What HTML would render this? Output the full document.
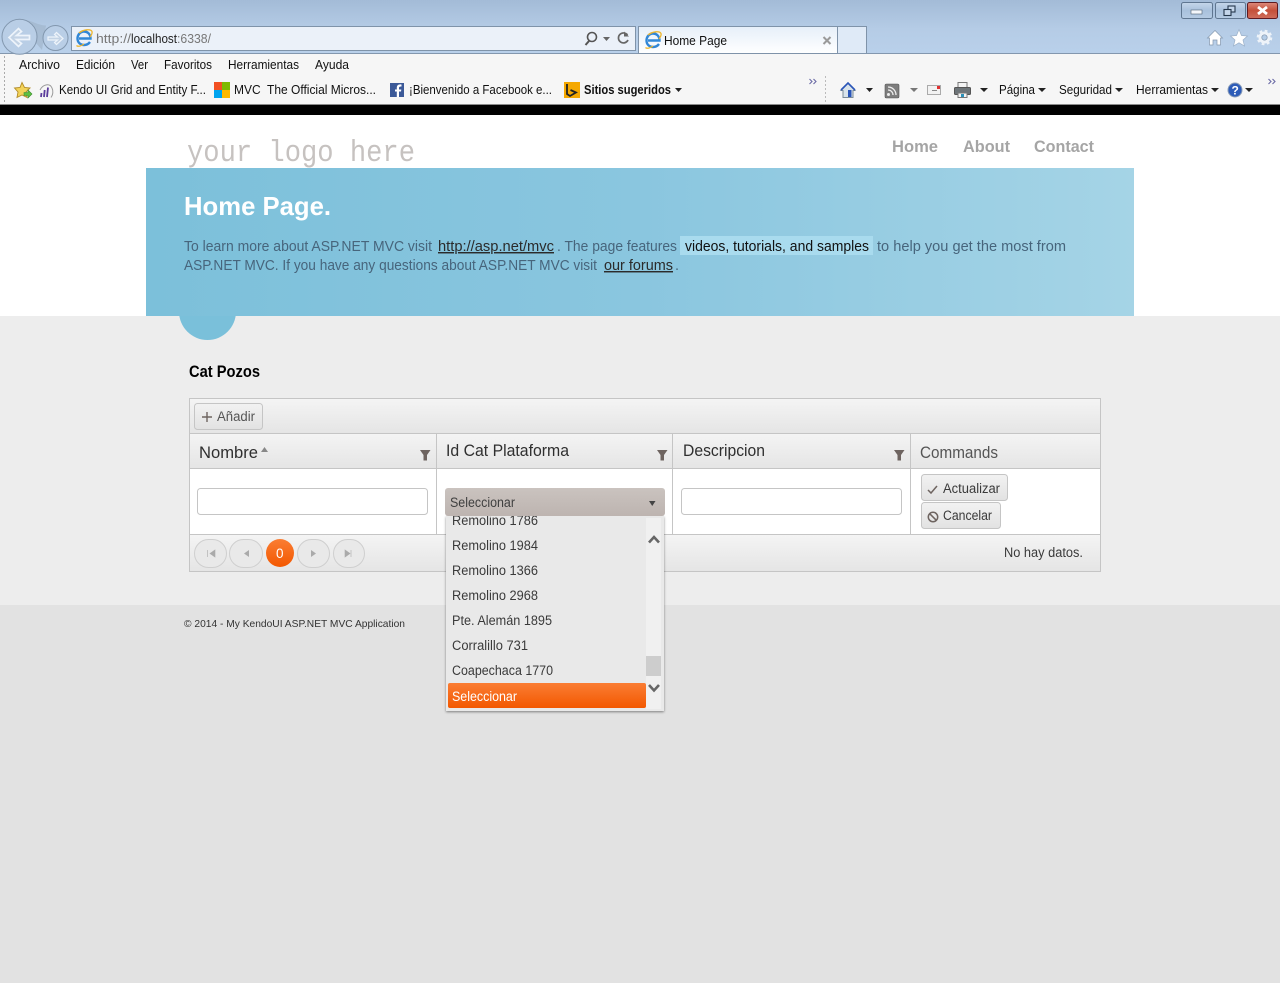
<!DOCTYPE html>
<html><head><meta charset="utf-8"><title>Home Page</title>
<style>
html,body{margin:0;padding:0;background:#e2e2e2;overflow:hidden}
svg{display:block;position:absolute;left:0;top:0}
text{font-family:"Liberation Sans",sans-serif;white-space:pre}
.m{font-size:12.5px;fill:#111}
.h{font-size:16.5px;fill:#2f2f2f}
.i{font-size:13.5px;fill:#3a3a3a}
.p{font-size:14.5px;fill:#47657c}
.n{font-size:17px;font-weight:bold;fill:#a5a5a5}
</style></head><body>
<svg width="1280" height="983" viewBox="0 0 1280 983" xmlns="http://www.w3.org/2000/svg">
<defs>
<linearGradient id="top" x1="0" y1="0" x2="0" y2="1"><stop offset="0" stop-color="#a3bbd7"/><stop offset=".55" stop-color="#b5cce6"/><stop offset="1" stop-color="#b9d0ea"/></linearGradient>
<linearGradient id="hero" x1="0" y1="0" x2="1" y2="0"><stop offset="0" stop-color="#7cc0da"/><stop offset=".5" stop-color="#8ac6df"/><stop offset="1" stop-color="#a5d4e6"/></linearGradient>
<linearGradient id="bar" x1="0" y1="0" x2="0" y2="1"><stop offset="0" stop-color="#f4f4f4"/><stop offset="1" stop-color="#e5e5e5"/></linearGradient>
<linearGradient id="btn" x1="0" y1="0" x2="0" y2="1"><stop offset="0" stop-color="#f2f2f2"/><stop offset="1" stop-color="#e2e2e2"/></linearGradient>
<linearGradient id="dd" x1="0" y1="0" x2="0" y2="1"><stop offset="0" stop-color="#cac3bf"/><stop offset="1" stop-color="#bdb4b0"/></linearGradient>
<linearGradient id="or" x1="0" y1="0" x2="0" y2="1"><stop offset="0" stop-color="#fa7d33"/><stop offset="1" stop-color="#f35800"/></linearGradient>
<linearGradient id="tab" x1="0" y1="0" x2="0" y2="1"><stop offset="0" stop-color="#e6eff9"/><stop offset="1" stop-color="#ffffff"/></linearGradient>
<linearGradient id="wb" x1="0" y1="0" x2="0" y2="1"><stop offset="0" stop-color="#c5d6ea"/><stop offset=".5" stop-color="#a9c1dc"/><stop offset="1" stop-color="#b5cbe3"/></linearGradient>
<linearGradient id="wr" x1="0" y1="0" x2="0" y2="1"><stop offset="0" stop-color="#dd8a7c"/><stop offset=".5" stop-color="#c4503a"/><stop offset="1" stop-color="#cf6e5c"/></linearGradient>
<filter id="sh" x="-10%" y="-10%" width="120%" height="120%"><feDropShadow dx="0" dy="1" stdDeviation="1.200" flood-color="#000" flood-opacity=".45"/></filter>
<clipPath id="lc"><rect x="446" y="516" width="200" height="195"/></clipPath>
</defs>

<!-- page backgrounds -->
<rect width="1280" height="983" fill="#e2e2e2"/>
<rect y="105" width="1280" height="211" fill="#fff"/>
<rect y="316" width="1280" height="289" fill="#ededed"/>

<!-- browser chrome -->
<rect width="1280" height="53" fill="url(#top)"/>
<rect y="53" width="1280" height="1" fill="#8397ae"/>
<rect y="54" width="1280" height="50" fill="#f6f6f6"/>
<rect y="104" width="1280" height="1" fill="#8a8a8a"/>
<rect y="105" width="1280" height="10" fill="#000"/>
<path d="M22 19.500C32 20 36 25 46 25.500L42 50L30 36Z" fill="#9fb3ca" opacity=".65"/>
<circle cx="19.500" cy="36.800" r="17.500" fill="#b9cee6" stroke="#8297ae"/>
<path d="M9 37.500L18.500 28.500L21.500 31.500L16.500 35.500H29.500V39.500H16.500L21.500 43.500L18.500 46.500Z" fill="#c3d3e5" stroke="#eef4fb" stroke-width="1.700"/>
<circle cx="55.500" cy="38" r="12.500" fill="#b9cee6" stroke="#8297ae"/>
<path d="M63 38.500L56.500 32.500L54.500 34.500L57.500 37H48V40H57.500L54.500 42.500L56.500 44.500Z" fill="#c3d3e5" stroke="#eef4fb" stroke-width="1.200"/>
<rect x="71.500" y="26.500" width="564" height="24" fill="#ebf1f9" stroke="#7f93a9"/>
<!-- IE icon -->
<path d="M79 38.500H90.500C90.500 34 87.500 31.500 84 31.500C80 31.500 77.500 35 77.500 38.500C77.500 42.500 80.500 45 84 45C86.500 45 88.500 44 90 42" fill="none" stroke="#3187d6" stroke-width="2.400"/>
<path d="M76.500 45.500C78 47 81 46 84 44M79 33C84 29 91 29 92 31.500C92.500 33 91.500 35 90 37" fill="none" stroke="#eeb52a" stroke-width="1.300"/>
<text x="96" y="43" class="m" style="fill:#777" textLength="35" lengthAdjust="spacingAndGlyphs">http://</text>
<text x="131" y="43" class="m" style="fill:#222" textLength="46" lengthAdjust="spacingAndGlyphs">localhost</text>
<text x="177" y="43" class="m" style="fill:#777" textLength="34" lengthAdjust="spacingAndGlyphs">:6338/</text>
<circle cx="592" cy="37" r="4.500" fill="none" stroke="#555" stroke-width="1.600"/>
<path d="M589 41L585.500 45" stroke="#555" stroke-width="2"/>
<path d="M603 37H610L606.500 41Z" fill="#666"/>
<path d="M627.500 35A5 5 0 1 0 628 40" fill="none" stroke="#666" stroke-width="1.700"/>
<path d="M624 31.500V36.500H629Z" fill="#666"/>
<rect x="638.500" y="26.500" width="199" height="27" fill="url(#tab)" stroke="#7f93a9"/>
<rect x="838" y="27" width="28.500" height="26" fill="#dfeaf7"/>
<path d="M838 26.500H866.500V53" fill="none" stroke="#7f93a9"/>
<!-- tab IE icon -->
<path d="M648 40.500H659.500C659.500 36 656.500 33.500 653 33.500C649 33.500 646.500 37 646.500 40.500C646.500 44.500 649.500 47 653 47C655.500 47 657.500 46 659 44" fill="none" stroke="#3187d6" stroke-width="2.400"/>
<path d="M645.500 47.500C647 49 650 48 653 46M648 35C653 31 660 31 661 33.500C661.500 35 660.500 37 659 39" fill="none" stroke="#eeb52a" stroke-width="1.300"/>
<text x="664" y="45" class="m" textLength="63" lengthAdjust="spacingAndGlyphs">Home Page</text>
<path d="M823.500 37L830.500 44M830.500 37L823.500 44" stroke="#9a9a9a" stroke-width="2"/>
<!-- window buttons -->
<rect x="1181.500" y="2.500" width="31" height="16" rx="2" fill="url(#wb)" stroke="#5f7690"/>
<rect x="1191" y="10" width="11" height="4" fill="#f4f7fb" stroke="#4f6175" stroke-width=".6"/>
<rect x="1215.500" y="2.500" width="30" height="16" rx="2" fill="url(#wb)" stroke="#5f7690"/>
<rect x="1228" y="6" width="7" height="6" fill="#c5d6ea" stroke="#26384c" stroke-width="1.100"/>
<rect x="1224" y="9.500" width="7" height="6" fill="#c5d6ea" stroke="#26384c" stroke-width="1.100"/>
<rect x="1247.500" y="2.500" width="30" height="16" rx="2" fill="url(#wr)" stroke="#5f1a20"/>
<path d="M1258 7L1267 14M1267 7L1258 14" stroke="#fff" stroke-width="2.800"/>
<!-- home star gear -->
<path d="M1207.500 38L1215 30.500L1222.500 38H1220.500V45H1217V40H1213V45H1209.500V38Z" fill="#fff" stroke="#8497ad" stroke-width=".7"/>
<path d="M1239 29.500L1241.500 35.500L1247.500 36L1243 40L1244.500 46L1239 42.800L1233.500 46L1235 40L1230.500 36L1236.500 35.500Z" fill="#fff" stroke="#9bb0c8" stroke-width=".7"/>
<circle cx="1264.500" cy="37.500" r="6.800" fill="none" stroke="#eef3f9" stroke-width="2" stroke-dasharray="2.800 2.540"/>
<circle cx="1264.500" cy="37.500" r="4.500" fill="none" stroke="#eef3f9" stroke-width="3"/>
<circle cx="1264.500" cy="37.500" r="2.700" fill="none" stroke="#8497ad" stroke-width=".7"/>
<!-- menu -->
<line x1="4.500" y1="56" x2="4.500" y2="103" stroke="#aaa" stroke-dasharray="2 2"/>
<text x="19" y="69" class="m" textLength="41" lengthAdjust="spacingAndGlyphs">Archivo</text>
<text x="76" y="69" class="m" textLength="39" lengthAdjust="spacingAndGlyphs">Edición</text>
<text x="131" y="69" class="m" textLength="17" lengthAdjust="spacingAndGlyphs">Ver</text>
<text x="164" y="69" class="m" textLength="48" lengthAdjust="spacingAndGlyphs">Favoritos</text>
<text x="228" y="69" class="m" textLength="71" lengthAdjust="spacingAndGlyphs">Herramientas</text>
<text x="315" y="69" class="m" textLength="34" lengthAdjust="spacingAndGlyphs">Ayuda</text>
<!-- favorites -->
<path d="M22 82.500L24.500 87.500L30 88L26 92L27 97.500L22 95L17 97.500L18 92L14.500 88L20 87.500Z" fill="#f3d35a" stroke="#b28b25" stroke-width=".9"/>
<path d="M24 92.500H28V90L32 94L28 98V95.500H24Z" fill="#5cc040" stroke="#3a8a2c" stroke-width=".6"/>
<path d="M41 97L41.500 93M44 97L44.700 90M47 97L48 87.500" stroke="#5b3c9c" stroke-width="1.800"/>
<path d="M40 90C43 84 50 83 52 88C53.500 91 53 95 51 97.500" fill="none" stroke="#999" stroke-width="1"/>
<text x="59" y="94" class="m" textLength="147" lengthAdjust="spacingAndGlyphs">Kendo UI Grid and Entity F...</text>
<rect x="214" y="82" width="8" height="8" fill="#f25022"/><rect x="222" y="82" width="8" height="8" fill="#7fba00"/><rect x="214" y="90" width="8" height="8" fill="#00a4ef"/><rect x="222" y="90" width="8" height="8" fill="#ffb900"/>
<text x="234" y="94" class="m" textLength="142" lengthAdjust="spacingAndGlyphs">MVC  The Official Micros...</text>
<rect x="390" y="83" width="14" height="14" fill="#3b5998"/>
<path d="M399 97V91.500H401L401.300 89.500H399V88C399 87 399.500 86.500 401.500 86.500V84.500C398 84 396.800 85.500 396.800 88V89.500H395V91.500H396.800V97Z" fill="#fff"/>
<text x="409" y="94" class="m" textLength="143" lengthAdjust="spacingAndGlyphs">¡Bienvenido a Facebook e...</text>
<rect x="564" y="82" width="16" height="16" fill="#f5a800"/>
<path d="M567 84V94L570 96L576 92.500L570.500 90" fill="none" stroke="#222" stroke-width="1.800"/>
<text x="584" y="94" class="m" style="font-weight:bold;fill:#111" textLength="87" lengthAdjust="spacingAndGlyphs">Sitios sugeridos</text>
<path d="M675 88H682L678.500 92Z" fill="#222"/>
<path d="M809.500 79L812 81.500L809.500 84M813.500 79L816 81.500L813.500 84" fill="none" stroke="#6a6aa5" stroke-width="1.100"/>
<line x1="825.500" y1="76" x2="825.500" y2="102" stroke="#bbb" stroke-dasharray="2 2"/>
<!-- command bar -->
<path d="M841 90.500L848 83L855 90.500H853V97.500H843V90.500Z" fill="#d9e3ea" stroke="#7a8b98"/>
<path d="M841 90L848 83L855 90" fill="none" stroke="#2a55b8" stroke-width="1.600"/>
<rect x="848" y="90" width="3.500" height="7" fill="#2a55b8"/>
<path d="M866 88H873L869.500 92Z" fill="#222"/>
<rect x="885" y="84" width="14" height="14" rx="1.500" fill="#7d7d7d" stroke="#555" stroke-width=".6"/>
<circle cx="888.500" cy="94.500" r="1.500" fill="#eee"/>
<path d="M888 90A5 5 0 0 1 893 95M888 87A8 8 0 0 1 896 95" fill="none" stroke="#eee" stroke-width="1.300"/>
<path d="M910 88H918L914 92Z" fill="#777"/>
<rect x="927.500" y="85.500" width="13" height="9" fill="#f2f2f2" stroke="#aaa"/>
<rect x="937" y="86" width="3" height="3" fill="#e03030"/><rect x="932" y="90" width="5" height="1" fill="#888"/>
<rect x="958" y="82.500" width="9" height="5" fill="#f4f4f4" stroke="#777"/>
<rect x="954.500" y="87.500" width="16" height="7" rx="1" fill="#6d7478" stroke="#555"/>
<rect x="958" y="93" width="9" height="4.500" fill="#f4f4f4" stroke="#777"/>
<rect x="961" y="94" width="3" height="3" fill="#2a90b8"/>
<path d="M980 88H988L984 92Z" fill="#222"/>
<text x="999" y="94" class="m" textLength="36" lengthAdjust="spacingAndGlyphs">Página</text>
<path d="M1038 88H1046L1042 92Z" fill="#222"/>
<text x="1059" y="94" class="m" textLength="53" lengthAdjust="spacingAndGlyphs">Seguridad</text>
<path d="M1115 88H1123L1119 92Z" fill="#222"/>
<text x="1136" y="94" class="m" textLength="72" lengthAdjust="spacingAndGlyphs">Herramientas</text>
<path d="M1211 88H1219L1215 92Z" fill="#222"/>
<circle cx="1235" cy="90" r="7" fill="#2d5cb8" stroke="#8b9db8"/>
<text x="1231.500" y="94.500" style="font-size:12px;font-weight:bold;fill:#fff">?</text>
<path d="M1245 88H1253L1249 92Z" fill="#222"/>
<path d="M1268.500 79L1271 81.500L1268.500 84M1272.500 79L1275 81.500L1272.500 84" fill="none" stroke="#6a6aa5" stroke-width="1.100"/>

<!-- header -->
<text x="187" y="161" style="font-family:'Liberation Mono',monospace;font-size:31px;fill:#c6c2c0" textLength="228" lengthAdjust="spacingAndGlyphs">your logo here</text>
<text x="892" y="152" class="n" textLength="46" lengthAdjust="spacingAndGlyphs">Home</text>
<text x="963" y="152" class="n" textLength="47" lengthAdjust="spacingAndGlyphs">About</text>
<text x="1034" y="152" class="n" textLength="60" lengthAdjust="spacingAndGlyphs">Contact</text>

<!-- hero -->
<circle cx="207.500" cy="311.500" r="28.500" fill="#7ac0da"/>
<rect x="146" y="168" width="988" height="148" fill="url(#hero)"/>
<text x="184" y="215" style="font-size:26px;font-weight:bold;fill:#fff" textLength="147" lengthAdjust="spacingAndGlyphs">Home Page.</text>
<text x="184" y="251" class="p" textLength="248" lengthAdjust="spacingAndGlyphs">To learn more about ASP.NET MVC visit</text>
<text x="438" y="251" class="p" style="fill:#2b2b2b;text-decoration:underline" textLength="116" lengthAdjust="spacingAndGlyphs">http://asp.net/mvc</text>
<text x="557" y="251" class="p" textLength="120" lengthAdjust="spacingAndGlyphs">. The page features</text>
<rect x="680" y="236" width="193" height="19" fill="#a9dbee"/>
<text x="685" y="251" class="p" style="fill:#111" textLength="184" lengthAdjust="spacingAndGlyphs">videos, tutorials, and samples</text>
<text x="877" y="251" class="p" textLength="189" lengthAdjust="spacingAndGlyphs">to help you get the most from</text>
<text x="184" y="270" class="p" textLength="413" lengthAdjust="spacingAndGlyphs">ASP.NET MVC. If you have any questions about ASP.NET MVC visit</text>
<text x="604" y="270" class="p" style="fill:#2b2b2b;text-decoration:underline" textLength="69" lengthAdjust="spacingAndGlyphs">our forums</text>
<text x="675" y="270" class="p">.</text>

<text x="189" y="377" style="font-size:16.500px;font-weight:bold;fill:#000" textLength="71" lengthAdjust="spacingAndGlyphs">Cat Pozos</text>

<!-- grid -->
<rect x="189.500" y="398.500" width="911" height="173" fill="#fff" stroke="#c5c5c5"/>
<rect x="190" y="399" width="910" height="34" fill="url(#bar)"/>
<rect x="190" y="433" width="910" height="1" fill="#c5c5c5"/>
<rect x="190" y="434" width="910" height="34" fill="url(#bar)"/>
<rect x="190" y="468" width="910" height="1" fill="#c5c5c5"/>
<rect x="190" y="535" width="910" height="36" fill="url(#bar)"/>
<rect x="190" y="534" width="910" height="1" fill="#c5c5c5"/>
<path d="M436.500 434V534M672.500 434V534M910.500 434V534" stroke="#c5c5c5"/>

<rect x="194.500" y="403.500" width="68" height="26" rx="3" fill="url(#btn)" stroke="#c5c5c5"/>
<path d="M207 412V422M202 417H212" stroke="#6e6460" stroke-width="1.400"/>
<text x="217" y="421" class="i" style="fill:#555" textLength="38" lengthAdjust="spacingAndGlyphs">Añadir</text>

<text x="199" y="458" class="h" textLength="59" lengthAdjust="spacingAndGlyphs">Nombre</text>
<path d="M261 452L264.500 447L268 452Z" fill="#888"/>
<path d="M420 450H430.500L427 455V460.500H423.500V455Z" fill="#6e6460"/>
<text x="446" y="456" class="h" textLength="123" lengthAdjust="spacingAndGlyphs">Id Cat Plataforma</text>
<path d="M657 450H667.500L664 455V460.500H660.500V455Z" fill="#6e6460"/>
<text x="683" y="456" class="h" textLength="82" lengthAdjust="spacingAndGlyphs">Descripcion</text>
<path d="M894 450H904.500L901 455V460.500H897.500V455Z" fill="#6e6460"/>
<text x="920" y="458" class="h" style="fill:#555" textLength="78" lengthAdjust="spacingAndGlyphs">Commands</text>

<rect x="197.500" y="488.500" width="230" height="26" rx="3" fill="#fff" stroke="#c5c5c5"/>
<rect x="681.500" y="488.500" width="220" height="26" rx="3" fill="#fff" stroke="#c5c5c5"/>

<rect x="921.500" y="474.500" width="86" height="26" rx="3" fill="url(#btn)" stroke="#c5c5c5"/>
<path d="M928 490L931 493L937 486" fill="none" stroke="#6e6460" stroke-width="1.500"/>
<text x="943" y="493" class="i" textLength="57" lengthAdjust="spacingAndGlyphs">Actualizar</text>
<rect x="921.500" y="502.500" width="79" height="26" rx="3" fill="url(#btn)" stroke="#c5c5c5"/>
<circle cx="933" cy="517" r="4.700" fill="none" stroke="#6e6460" stroke-width="1.500"/>
<path d="M929.800 513.800L936.200 520.200" stroke="#6e6460" stroke-width="1.500"/>
<text x="943" y="520" class="i" textLength="49" lengthAdjust="spacingAndGlyphs">Cancelar</text>

<!-- pager -->
<g fill="#e9e9e9" stroke="#cfcfcf">
<rect x="194.500" y="539.500" width="32" height="28" rx="14"/>
<rect x="229.500" y="539.500" width="33" height="28" rx="14"/>
<rect x="297.500" y="539.500" width="32" height="28" rx="14"/>
<rect x="333.500" y="539.500" width="31" height="28" rx="14"/>
</g>
<path d="M207.500 550V557M215 550V557L210 553.500Z" fill="#aaa" stroke="#aaa" stroke-width=".6"/>
<path d="M249 550V557L244 553.500Z" fill="#aaa"/>
<path d="M311 550V557L316 553.500Z" fill="#aaa"/>
<path d="M345 550V557L350 553.500ZM351 550V557" fill="#aaa" stroke="#aaa" stroke-width=".6"/>
<circle cx="280" cy="553" r="14" fill="url(#or)"/>
<text x="276" y="558" style="font-size:13.500px;fill:#fff">0</text>
<text x="1004" y="557" class="i" textLength="79" lengthAdjust="spacingAndGlyphs">No hay datos.</text>

<!-- footer -->
<text x="184" y="627" style="font-size:10.500px;fill:#333" textLength="221" lengthAdjust="spacingAndGlyphs">© 2014 - My KendoUI ASP.NET MVC Application</text>

<!-- dropdown -->
<rect x="446" y="516" width="218" height="195" fill="#e9e9e9" filter="url(#sh)"/>
<rect x="646" y="518" width="15" height="191" fill="#f0f0f0"/>
<rect x="646" y="656" width="15" height="20" fill="#cdcdcd"/>
<path d="M649 542.500L654 537L659 542.500" fill="none" stroke="#666" stroke-width="2.600"/>
<path d="M649 685L654 690.500L659 685" fill="none" stroke="#666" stroke-width="2.600"/>
<g clip-path="url(#lc)">
<text x="452" y="525" class="i" textLength="86" lengthAdjust="spacingAndGlyphs">Remolino 1786</text>
<text x="452" y="550" class="i" textLength="86" lengthAdjust="spacingAndGlyphs">Remolino 1984</text>
<text x="452" y="575" class="i" textLength="86" lengthAdjust="spacingAndGlyphs">Remolino 1366</text>
<text x="452" y="600" class="i" textLength="86" lengthAdjust="spacingAndGlyphs">Remolino 2968</text>
<text x="452" y="625" class="i" textLength="100" lengthAdjust="spacingAndGlyphs">Pte. Alemán 1895</text>
<text x="452" y="650" class="i" textLength="76" lengthAdjust="spacingAndGlyphs">Corralillo 731</text>
<text x="452" y="675" class="i" textLength="101" lengthAdjust="spacingAndGlyphs">Coapechaca 1770</text>
</g>
<rect x="448" y="683" width="198" height="25" rx="2" fill="url(#or)"/>
<text x="452" y="701" class="i" style="fill:#fff" textLength="65" lengthAdjust="spacingAndGlyphs">Seleccionar</text>
<rect x="445" y="488" width="220" height="28" rx="3" fill="url(#dd)"/>
<text x="450" y="507" class="i" style="fill:#3f3f3f" textLength="65" lengthAdjust="spacingAndGlyphs">Seleccionar</text>
<path d="M649 501H655.500L652.250 506Z" fill="#444"/>
</svg>
</body></html>
